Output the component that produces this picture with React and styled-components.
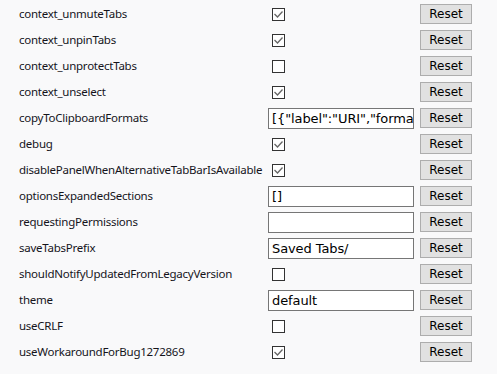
import React from "react";
import styled, { createGlobalStyle } from "styled-components";

const GlobalStyle = createGlobalStyle`
  html, body {
    margin: 0;
    padding: 0;
    background: #f9f9fa;
  }
`;

const Table = styled.div`
  display: grid;
  grid-template-columns: 243px 146px 52px;
  grid-auto-rows: 26px;
  column-gap: 6px;
  align-items: center;
  padding: 1px 0 0 19px;
  font-family: "Noto Sans", "Open Sans", sans-serif;
  font-size: 11.5px;
  letter-spacing: -0.25px;
  color: #15141a;
`;

const Label = styled.div`
  white-space: nowrap;
  line-height: 16px;
`;

const Value = styled.div`
  display: flex;
  align-items: center;
  height: 100%;
`;

const Box = styled.span`
  box-sizing: border-box;
  width: 13px;
  height: 13px;
  margin-left: 4px;
  border: 1px solid #333;
  background: #fff;
  display: flex;
  align-items: center;
  justify-content: center;
`;

const TextInput = styled.div`
  box-sizing: border-box;
  width: 146px;
  height: 21px;
  border: 1px solid #767676;
  background: #fff;
  padding: 0 3px;
  font-family: "DejaVu Sans", sans-serif;
  font-size: 13px;
  letter-spacing: -0.1px;
  line-height: 19px;
  white-space: nowrap;
  overflow: hidden;
  color: #000;
`;

const ResetButton = styled.button`
  box-sizing: border-box;
  width: 52px;
  height: 20px;
  margin: 0;
  padding: 0;
  border: 1px solid #adadad;
  background: #e1e1e1;
  font-family: "DejaVu Sans", sans-serif;
  font-size: 12px;
  color: #000;
`;

const Check = () => (
  <svg width="11" height="11" viewBox="0 0 11 11">
    <path d="M1.5 5 L4.5 8 L9.5 2.5" fill="none" stroke="#666" strokeWidth="1.3" />
  </svg>
);

const rows = [
  ["context_unmuteTabs", "check", true],
  ["context_unpinTabs", "check", true],
  ["context_unprotectTabs", "check", false],
  ["context_unselect", "check", true],
  ["copyToClipboardFormats", "text", '[{"label":"URI","format":"%URL%"}]'],
  ["debug", "check", true],
  ["disablePanelWhenAlternativeTabBarIsAvailable", "check", true],
  ["optionsExpandedSections", "text", "[]"],
  ["requestingPermissions", "text", ""],
  ["saveTabsPrefix", "text", "Saved Tabs/"],
  ["shouldNotifyUpdatedFromLegacyVersion", "check", false],
  ["theme", "text", "default"],
  ["useCRLF", "check", false],
  ["useWorkaroundForBug1272869", "check", true],
];

export default function App() {
  return (
    <>
      <GlobalStyle />
      <Table>
        {rows.map(([name, kind, val]) => (
          <React.Fragment key={name}>
            <Label>{name}</Label>
            <Value>
              {kind === "check" ? (
                <Box>{val && <Check />}</Box>
              ) : (
                <TextInput>{val}</TextInput>
              )}
            </Value>
            <ResetButton>Reset</ResetButton>
          </React.Fragment>
        ))}
      </Table>
    </>
  );
}
